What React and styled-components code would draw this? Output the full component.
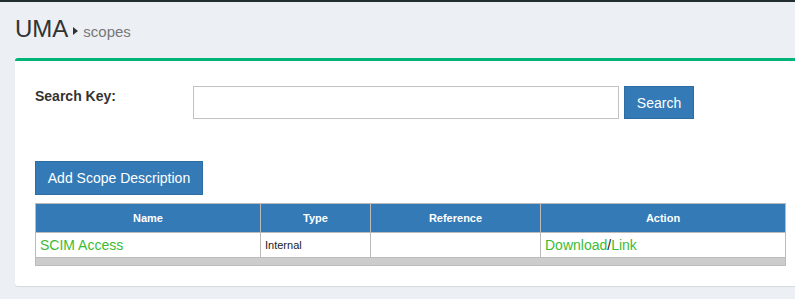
import React from 'react';
import styled, { createGlobalStyle } from 'styled-components';

const GlobalStyle = createGlobalStyle`
    body {
        margin: 0;
        background: #ecf0f5;
        font-family: "Liberation Sans", Arial, sans-serif;
        color: #333;
    }
`;

const App = () => {
    return (
        <Page>
            <GlobalStyle />
            <TopBar />
            <Header>
                <Title>UMA</Title>
                <Caret />
                <Sub>scopes</Sub>
            </Header>
            <Box>
                <SearchRow>
                    <Label>Search Key:</Label>
                    <Input type="text" />
                    <Button>Search</Button>
                </SearchRow>
                <AddButton>Add Scope Description</AddButton>
                <Table>
                    <colgroup>
                        <col style={{ width: 225 }} />
                        <col style={{ width: 110 }} />
                        <col style={{ width: 170 }} />
                        <col style={{ width: 245 }} />
                    </colgroup>
                    <thead>
                        <tr>
                            <Th>Name</Th>
                            <Th>Type</Th>
                            <Th>Reference</Th>
                            <Th>Action</Th>
                        </tr>
                    </thead>
                    <tbody>
                        <tr>
                            <Td><GreenLink>SCIM Access</GreenLink></Td>
                            <Td small>Internal</Td>
                            <Td></Td>
                            <Td><GreenLink>Download</GreenLink>/<GreenLink>Link</GreenLink></Td>
                        </tr>
                    </tbody>
                    <tfoot>
                        <tr>
                            <Foot colSpan={4}></Foot>
                        </tr>
                    </tfoot>
                </Table>
            </Box>
        </Page>
    );
}

const Page = styled.div`
    min-height: 299px;
`;

const TopBar = styled.div`
    height: 2px;
    background: #222d32;
`;

const Header = styled.div`
    display: flex;
    align-items: baseline;
    padding: 14px 15px 0;
    height: 26px;
`;

const Title = styled.h1`
    margin: 0;
    font-size: 24px;
    font-weight: 400;
    line-height: 26px;
    color: #333;
`;

const Caret = styled.span`
    display: inline-block;
    width: 0;
    height: 0;
    border-top: 4px solid transparent;
    border-bottom: 4px solid transparent;
    border-left: 5px solid #333;
    margin: 0 5px 0 5px;
    align-self: center;
    position: relative;
    top: 2px;
`;

const Sub = styled.small`
    font-size: 15px;
    color: #777;
`;

const Box = styled.div`
    margin: 16px 0 0 15px;
    background: #fff;
    border-top: 3px solid #00b377;
    border-radius: 3px 0 0 3px;
    box-shadow: 0 1px 1px rgba(0, 0, 0, 0.1);
    padding: 25px 0 20px 20px;
`;

const SearchRow = styled.div`
    display: flex;
    align-items: flex-start;
`;

const Label = styled.label`
    width: 158px;
    font-size: 14px;
    font-weight: 700;
    line-height: 20px;
`;

const Input = styled.input`
    box-sizing: border-box;
    width: 426px;
    height: 33px;
    border: 1px solid #c3c3c3;
    margin: 0;
    padding: 6px 12px;
    font-size: 14px;
    outline: none;
`;

const Button = styled.button`
    box-sizing: border-box;
    height: 33px;
    width: 70px;
    margin-left: 5px;
    background: #337ab7;
    border: 1px solid #2e6da4;
    color: #fff;
    font-family: "Liberation Sans", Arial, sans-serif;
    font-size: 14px;
    padding: 0;
`;

const AddButton = styled(Button)`
    display: block;
    width: 168px;
    height: 34px;
    margin: 42px 0 8px;
`;

const Table = styled.table`
    width: 750px;
    border-collapse: collapse;
    table-layout: fixed;
    border: 1px solid #bbb;
`;

const Th = styled.th`
    background: #337ab7;
    color: #fff;
    font-size: 11px;
    font-weight: 700;
    height: 28px;
    padding: 0 5px;
    border: 1px solid #bbb;
    text-align: center;
`;

const Td = styled.td`
    height: 24px;
    padding: 0 4px;
    border: 1px solid #bbb;
    font-size: ${props => (props.small ? '11px' : '14px')};
    color: #222;
    vertical-align: middle;
`;

const GreenLink = styled.a`
    color: #3cbb34;
    font-size: 14px;
    text-decoration: none;
`;

const Foot = styled.td`
    height: 7px;
    padding: 0;
    background: #ccc;
    border: 1px solid #bbb;
`;

export default App;
